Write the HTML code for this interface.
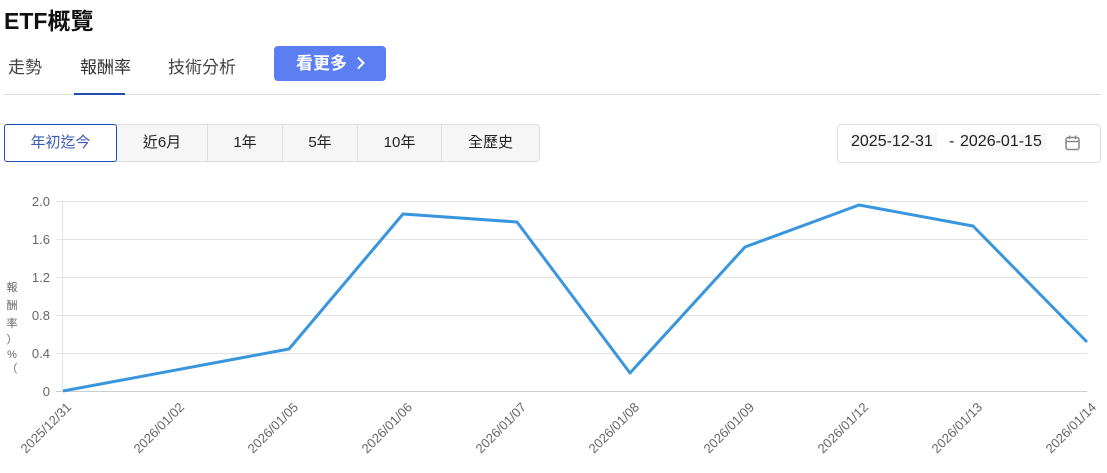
<!DOCTYPE html>
<html><head><meta charset="utf-8"><style>
*{margin:0;padding:0;box-sizing:border-box}
body{width:1107px;height:473px;background:#fff;font-family:"Liberation Sans","Noto Sans CJK TC",sans-serif;position:relative;overflow:hidden;color:#333}
.a{position:absolute}
h1{position:absolute;left:4px;top:2px;font-size:23px;font-weight:bold;color:#111;letter-spacing:0}
.tab{position:absolute;top:53px;font-size:17px;color:#444}
.btn{position:absolute;left:274px;top:46px;width:112px;height:35px;background:#5b7ff2;border-radius:4px;color:#fff;font-size:17px;font-weight:bold;line-height:35px;padding-left:22px}
.seg{position:absolute;top:124px;height:38px;border:1px solid #ddd;background:#f6f6f6;font-size:15px;line-height:36px;text-align:center;color:#222}
</style></head><body>
<h1>ETF概覽</h1>
<div class="tab" style="left:8px">走勢</div>
<div class="tab" style="left:80px;color:#333">報酬率</div>
<div class="tab" style="left:168px">技術分析</div>
<div class="btn">看更多 <svg width="10" height="14" viewBox="0 0 10 14" style="vertical-align:-1px;margin-left:4px"><path d="M2 1.5l5.5 5.5L2 12.5" fill="none" stroke="#fff" stroke-width="2"/></svg></div>
<div class="a" style="left:4px;top:94px;width:1097px;height:1px;background:#ddd"></div>
<div class="a" style="left:74px;top:93px;width:51px;height:2px;background:#1e4fb0"></div>
<div class="seg" style="left:116px;width:92px">近6月</div>
<div class="seg" style="left:207px;width:76px">1年</div>
<div class="seg" style="left:282px;width:76px">5年</div>
<div class="seg" style="left:357px;width:85px">10年</div>
<div class="seg" style="left:441px;width:99px;border-radius:0 4px 4px 0">全歷史</div>
<div class="seg" style="left:4px;width:113px;background:#fff;border-color:#1e4fb0;color:#3a5bb0;border-radius:3px">年初迄今</div>
<div class="a" style="left:837px;top:124px;width:264px;height:39px;border:1px solid #ddd;border-radius:4px"></div>
<div class="a" style="left:851px;top:133px;font-size:16px;background:#f7f7f7;padding:0 4px 0 0;color:#222">2025-12-31</div>
<div class="a" style="left:949px;top:133px;font-size:16px;color:#222">-</div>
<div class="a" style="left:960px;top:133px;font-size:16px;background:#f7f7f7;padding:0 4px 0 0;color:#222">2026-01-15</div>
<svg class="a" style="left:1064px;top:134px" width="18" height="18" viewBox="0 0 18 18"><rect x="2" y="3.5" width="13" height="12" rx="2" fill="none" stroke="#888" stroke-width="1.5"/><path d="M2 7.5h13M5.5 1.5v3.5M11.5 1.5v3.5" stroke="#888" stroke-width="1.5"/></svg>
<svg class="a" style="left:0;top:0" width="1107" height="473">
<g stroke="#e3e3e3" stroke-width="1">
<line x1="56" x2="1087" y1="201.5" y2="201.5"/><line x1="56" x2="1087" y1="239.5" y2="239.5"/><line x1="56" x2="1087" y1="277.5" y2="277.5"/><line x1="56" x2="1087" y1="315.5" y2="315.5"/><line x1="56" x2="1087" y1="353.5" y2="353.5"/>
<line x1="62.5" x2="62.5" y1="201" y2="391"/>
</g>
<line x1="56" x2="1087" y1="391.5" y2="391.5" stroke="#ccc"/>
<g font-size="13" fill="#666" text-anchor="end" font-family="Liberation Sans,sans-serif">
<text x="50" y="206">2.0</text><text x="50" y="244">1.6</text><text x="50" y="282">1.2</text><text x="50" y="320">0.8</text><text x="50" y="358">0.4</text><text x="50" y="396">0</text>
</g>
<g font-size="11" fill="#666" font-family="Liberation Sans,'Noto Sans CJK TC',sans-serif" text-anchor="middle">
<text x="12" y="291">報</text><text x="12" y="309">酬</text><text x="12" y="327">率</text><text x="12" y="343">）</text><text x="12" y="358">%</text><text x="12" y="372">（</text>
</g>
<g font-size="13" fill="#666" text-anchor="end" font-family="Liberation Sans,sans-serif">
<text transform="translate(72,408) rotate(-45)">2025/12/31</text>
<text transform="translate(185,408) rotate(-45)">2026/01/02</text>
<text transform="translate(299,408) rotate(-45)">2026/01/05</text>
<text transform="translate(413,408) rotate(-45)">2026/01/06</text>
<text transform="translate(527,408) rotate(-45)">2026/01/07</text>
<text transform="translate(640,408) rotate(-45)">2026/01/08</text>
<text transform="translate(755,408) rotate(-45)">2026/01/09</text>
<text transform="translate(869,408) rotate(-45)">2026/01/12</text>
<text transform="translate(983,408) rotate(-45)">2026/01/13</text>
<text transform="translate(1097,408) rotate(-45)">2026/01/14</text>
</g>
<polyline fill="none" stroke="#3a96dc" stroke-width="3" stroke-linejoin="round" points="63,391 289,349 403,214 517,222 630,373 745,247 859,205 973,226 1087,342"/>
</svg>
</body></html>
